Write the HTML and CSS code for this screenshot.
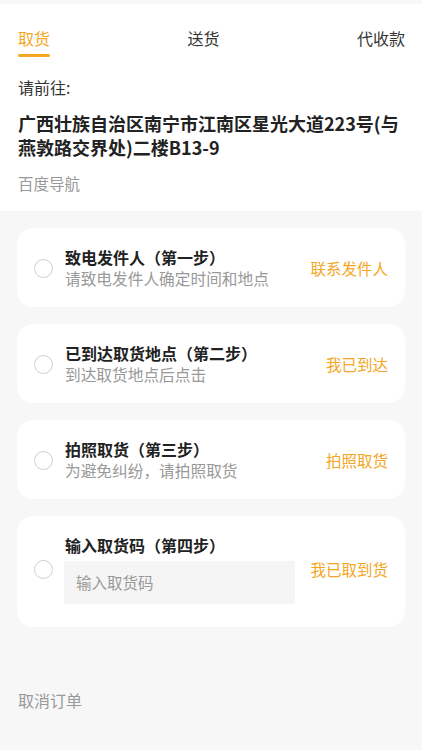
FILE: index.html
```html
<!DOCTYPE html>
<html lang="zh-CN">
<head>
<meta charset="utf-8">
<title>取货</title>
<link rel="stylesheet" href="styles.css">
</head>
<body>
<div class="page">
  <header class="head">
    <nav class="tabs">
      <div class="tab active">取货</div>
      <div class="tab">送货</div>
      <div class="tab">代收款</div>
    </nav>
    <div class="goto">请前往:</div>
    <div class="addr">广西壮族自治区南宁市江南区星光大道223号(与燕敦路交界处)二楼B13-9</div>
    <div class="nav-link">百度导航</div>
  </header>

  <section class="steps">
    <div class="card">
      <span class="radio"></span>
      <div class="body">
        <div class="title">致电发件人（第一步）</div>
        <div class="sub">请致电发件人确定时间和地点</div>
      </div>
      <div class="action">联系发件人</div>
    </div>
    <div class="card">
      <span class="radio"></span>
      <div class="body">
        <div class="title">已到达取货地点（第二步）</div>
        <div class="sub">到达取货地点后点击</div>
      </div>
      <div class="action">我已到达</div>
    </div>
    <div class="card">
      <span class="radio"></span>
      <div class="body">
        <div class="title">拍照取货（第三步）</div>
        <div class="sub">为避免纠纷，请拍照取货</div>
      </div>
      <div class="action">拍照取货</div>
    </div>
    <div class="card card-code">
      <span class="radio"></span>
      <div class="body">
        <div class="title">输入取货码（第四步）</div>
        <div class="code-input">输入取货码</div>
      </div>
      <div class="action">我已取到货</div>
    </div>
  </section>

  <div class="cancel">取消订单</div>
</div>
</body>
</html>
```

FILE: styles.css
```css
* { box-sizing: border-box; }
html, body { margin: 0; padding: 0; }
body {
  background: #f7f7f7;
  font-family: "Noto Sans CJK SC", "Noto Sans", sans-serif;
  color: #333;
}
.page {
  width: 422px;
  min-height: 750px;
  padding-top: 4px;
}
.head {
  background: #fff;
  padding: 23px 17px 17px 18px;
}
.tabs {
  display: flex;
  justify-content: space-between;
  align-items: flex-start;
}
.tab {
  font-size: 16px;
  line-height: 22px;
  color: #333;
}
.tab.active { color: #f5a623; }
.tab.active::after {
  content: "";
  display: block;
  height: 3px;
  margin-top: 5px;
  background: #f5a623;
  border-radius: 2px;
}
.goto {
  margin-top: 19px;
  font-size: 16px;
  line-height: 22px;
  color: #333;
}
.addr {
  margin-top: 13px;
  font-size: 18px;
  line-height: 24px;
  font-weight: 600;
  color: #222;
}
.nav-link {
  margin-top: 13px;
  font-size: 15.5px;
  line-height: 22px;
  color: #999;
}
.steps {
  display: flex;
  flex-direction: column;
  gap: 17px;
  padding: 17px 17px 0;
}
.card {
  display: flex;
  align-items: center;
  background: #fff;
  border-radius: 16px;
  padding: 18px 17px 17px 17px;
}
.card-code { padding-bottom: 23px; }
.radio {
  flex: none;
  width: 19px;
  height: 19px;
  border: 1px solid #cfcfcf;
  border-radius: 50%;
  background: #fff;
}
.body {
  flex: 1;
  min-width: 0;
  margin-left: 12px;
}
.title {
  font-size: 16px;
  line-height: 22px;
  font-weight: 600;
  color: #222;
}
.sub {
  font-size: 15.7px;
  line-height: 22px;
  color: #999;
}
.code-input {
  margin-top: 5px;
  width: 231px;
  height: 43px;
  margin-left: -1px;
  padding-left: 12px;
  background: #f5f5f5;
  font-size: 15.5px;
  line-height: 43px;
  color: #999;
}
.action {
  flex: none;
  font-size: 15.5px;
  line-height: 22px;
  color: #f5a623;
}
.cancel {
  margin-top: 62px;
  padding-left: 18px;
  font-size: 16px;
  line-height: 22px;
  color: #999;
}
```
